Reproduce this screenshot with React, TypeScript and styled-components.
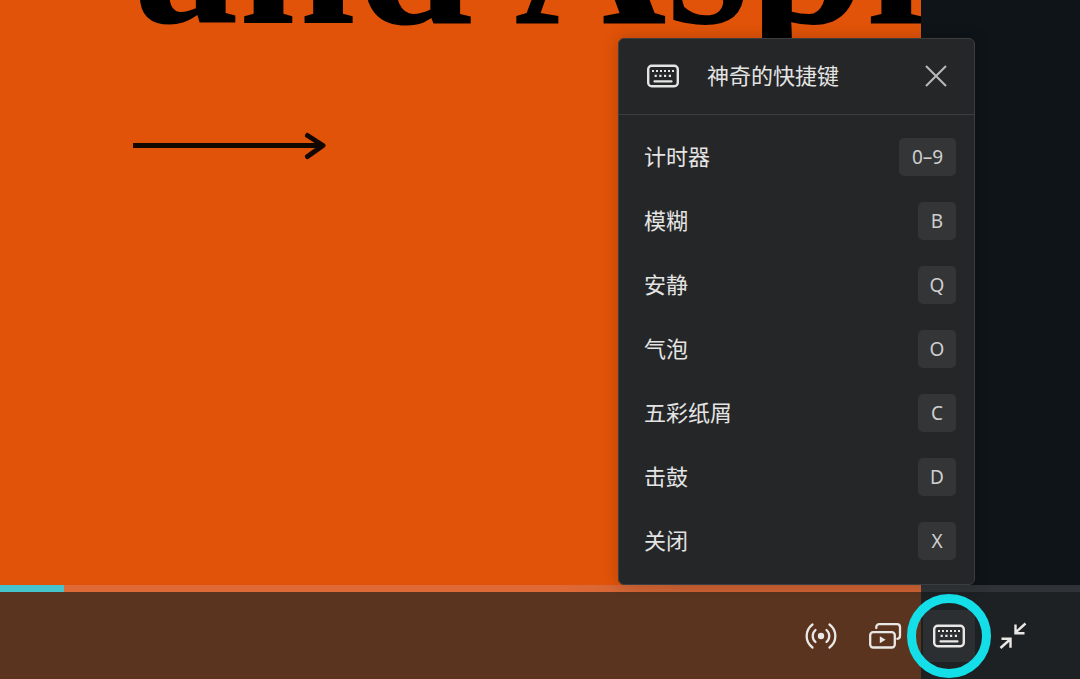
import React, { useState } from "react";
import styled, { createGlobalStyle } from "styled-components";

const GlobalStyle = createGlobalStyle`
  *, *::before, *::after { box-sizing: border-box; }
  body {
    margin: 0;
    background: #0e1418;
    font-family: "Noto Sans", "Noto Sans CJK SC", sans-serif;
  }
`;

const Screen = styled.main`
  display: grid;
  grid-template: minmax(0, 1fr) / minmax(0, 1fr);
  height: 100vh;
  overflow: hidden;
  background: #0e1418;
`;

const Slide = styled.section`
  grid-area: 1 / 1;
  width: 85.3%;
  padding-left: 133px;
  overflow: hidden;
  background: #e15308;
  color: #000;
`;

const Headline = styled.h1`
  display: flex;
  align-items: flex-end;
  height: 72px;
  margin: 0;
  font: 700 211px/240px "Liberation Serif", serif;
  white-space: pre;
`;

const LongArrow = styled.svg`
  display: block;
  width: 194px;
  height: 28px;
  margin-top: 60px;
`;

const Controls = styled.footer`
  grid-area: 1 / 1;
  align-self: end;
  position: relative;
  background: rgba(35, 39, 40, 0.71);
`;

const Timeline = styled.div`
  height: 7px;
  background: #2f3337;
`;

const SlideTimeline = styled.div`
  width: 85.3%;
  height: 7px;
  background: linear-gradient(to right, #e06a37 60%, #cd6233 75%);
`;

const Played = styled.div`
  height: 7px;
  background: #46c3cd;
`;

const Tools = styled.div`
  display: flex;
  justify-content: flex-end;
  align-items: center;
  gap: 12px;
  height: 87px;
  padding-right: 41px;
`;

const Anchor = styled.div`
  position: relative;
`;

const IconButton = styled.button<{ $active?: boolean }>`
  display: flex;
  align-items: center;
  justify-content: center;
  width: 52px;
  height: 52px;
  padding: 0;
  border: 0;
  border-radius: 4px;
  background: ${(p) => (p.$active ? "#2b2f32" : "transparent")};
  color: #e9e8e6;
  cursor: pointer;
`;

const Ring = styled.span`
  position: absolute;
  inset: -16px;
  border: 9px solid #14dfe9;
  border-radius: 50%;
  pointer-events: none;
`;

const Panel = styled.section`
  position: absolute;
  right: 0;
  bottom: calc(100% + 25px);
  width: 357px;
  border: 1px solid #3b3d3f;
  border-radius: 6px;
  background: #252627;
  color: #e4e4e4;
  box-shadow: 0 0 16px rgba(0, 0, 0, 0.2);
`;

const PanelHeader = styled.header`
  display: flex;
  align-items: center;
  height: 76px;
  padding: 0 26px 0 28px;
  border-bottom: 1px solid #3b3d3f;
`;

const PanelTitle = styled.h2`
  flex: 1;
  margin: 0 0 0 28px;
  padding-bottom: 4px;
  font: 400 22px/32px "Noto Sans CJK SC", sans-serif;
`;

const CloseButton = styled.button`
  display: flex;
  padding: 0;
  border: 0;
  background: none;
  color: #b9babb;
  cursor: pointer;
`;

const Shortcuts = styled.dl`
  display: flex;
  flex-direction: column;
  gap: 26px;
  margin: 0;
  padding: 23px 18px 24px 25px;
`;

const Shortcut = styled.div`
  display: flex;
  justify-content: space-between;
  align-items: center;
`;

const Label = styled.dt`
  padding-bottom: 4px;
  font: 400 22px/32px "Noto Sans CJK SC", sans-serif;
`;

const KeyCell = styled.dd`
  display: flex;
  margin: 0;
`;

const Key = styled.kbd<{ $wide?: boolean }>`
  width: ${(p) => (p.$wide ? "57px" : "38px")};
  border-radius: 5px;
  background: #343537;
  color: #cfcfcf;
  font: 400 19px/38px "Noto Sans", sans-serif;
  text-align: center;
`;

const KeyboardIcon = () => (
  <svg width="32" height="24" viewBox="0 0 32 24" fill="none" stroke="currentColor" aria-hidden="true">
    <rect x="1.2" y="1.7" width="29.6" height="20.6" rx="3.5" strokeWidth="2.4" />
    <g strokeWidth="2.2">
      <path d="M5 7h2M9 7h2M13 7h2M17 7h2M21 7h2M25 7h2" />
      <path d="M7.6 11.8h2.2M12.3 11.8h2.2M17 11.8h2.2M21.8 11.8h2.2" />
      <path d="M7.5 17.4h17" strokeLinecap="round" />
    </g>
  </svg>
);

const BroadcastIcon = () => (
  <svg width="32" height="28" viewBox="0 0 32 28" fill="none" stroke="currentColor" strokeWidth="2.3" strokeLinecap="round" aria-hidden="true">
    <circle cx="16" cy="14" r="3.2" fill="currentColor" stroke="none" />
    <path d="M10.500 8C6.800 11.200 6.800 16.800 10.500 20M21.500 8c3.700 3.200 3.700 8.800 0 12" />
    <path d="M7.500 2.500C-.3 8.500-.3 19.500 7.500 25.500M24.500 2.500c7.800 6 7.800 17 0 23" />
  </svg>
);

const WindowsIcon = () => (
  <svg width="34" height="28" viewBox="0 0 34 28" fill="none" stroke="currentColor" strokeWidth="2.3" strokeLinecap="round" aria-hidden="true">
    <rect x="2.2" y="10.2" width="24.6" height="15.3" rx="3" />
    <path d="M8.300 6V5c0-1.700 1.200-2.800 2.900-2.800h17.800c1.800 0 3 1.200 3 3v8.600c0 1.700-1 2.900-2.700 3" />
    <path d="M11.800 14.300v7l5.800-3.500z" fill="currentColor" stroke="none" />
  </svg>
);

const ShrinkIcon = () => (
  <svg width="28" height="28" viewBox="0 0 28 28" fill="none" stroke="currentColor" strokeWidth="2.4" aria-hidden="true">
    <path d="M26.500 1.500 17 10M16.500 2.500v8.700h9" />
    <path d="M1.500 26 11 17.500M2.500 16.700h9v9" />
  </svg>
);

const shortcuts: [string, string][] = [
  ["计时器", "0–9"],
  ["模糊", "B"],
  ["安静", "Q"],
  ["气泡", "O"],
  ["五彩纸屑", "C"],
  ["击鼓", "D"],
  ["关闭", "X"],
];

export default function App() {
  const [open, setOpen] = useState(true);

  return (
    <Screen>
      <GlobalStyle />
      <Slide>
        <Headline>and Aspi</Headline>
        <LongArrow viewBox="0 0 194 28" fill="none" stroke="#120800" strokeWidth="5" aria-hidden="true">
          <path d="M0 13.500H190" />
          <path d="M174.500 3.500 190 13.500l-15.500 11" strokeLinecap="round" strokeLinejoin="round" />
        </LongArrow>
      </Slide>
      <Controls>
        <Timeline>
          <SlideTimeline>
            <Played style={{ width: "7%" }} />
          </SlideTimeline>
        </Timeline>
        <Tools>
          <IconButton type="button" aria-label="直播">
            <BroadcastIcon />
          </IconButton>
          <IconButton type="button" aria-label="演示窗口">
            <WindowsIcon />
          </IconButton>
          <Anchor>
            <IconButton type="button" $active aria-label="快捷键" aria-expanded={open} onClick={() => setOpen(!open)}>
              <KeyboardIcon />
            </IconButton>
            <Ring />
            {open && (
              <Panel aria-labelledby="shortcuts-title">
                <PanelHeader>
                  <KeyboardIcon />
                  <PanelTitle id="shortcuts-title">神奇的快捷键</PanelTitle>
                  <CloseButton type="button" aria-label="关闭面板" onClick={() => setOpen(false)}>
                    <svg width="24" height="24" viewBox="0 0 24 24" stroke="currentColor" strokeWidth="2" aria-hidden="true">
                      <path d="M2 2l20 20M22 2 2 22" />
                    </svg>
                  </CloseButton>
                </PanelHeader>
                <Shortcuts>
                  {shortcuts.map(([label, key]) => (
                    <Shortcut key={key}>
                      <Label>{label}</Label>
                      <KeyCell>
                        <Key $wide={key.length > 1}>{key}</Key>
                      </KeyCell>
                    </Shortcut>
                  ))}
                </Shortcuts>
              </Panel>
            )}
          </Anchor>
          <IconButton type="button" aria-label="退出全屏">
            <ShrinkIcon />
          </IconButton>
        </Tools>
      </Controls>
    </Screen>
  );
}
